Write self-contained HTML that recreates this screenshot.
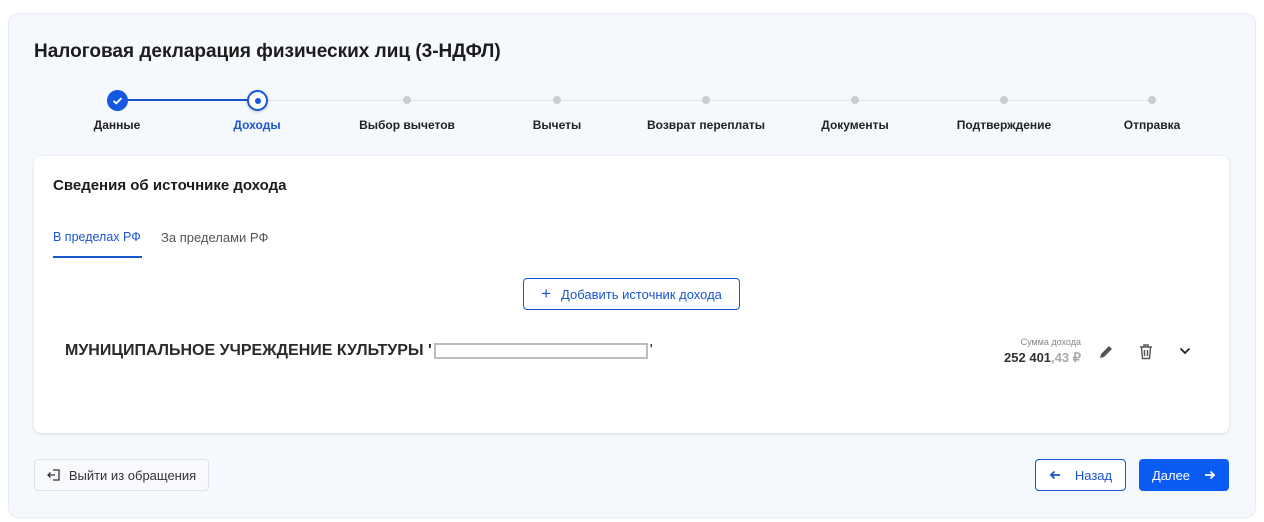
<!DOCTYPE html>
<html><head><meta charset="utf-8"><style>
*{box-sizing:border-box;margin:0;padding:0}
body{width:1264px;height:522px;background:#fff;font-family:"Liberation Sans",sans-serif;position:relative;overflow:hidden;color:#1f1f1f}
.panel{position:absolute;left:8px;top:13px;width:1248px;height:505px;background:#f5f8fd;border:1px solid #e8ecf3;border-radius:10px}
.title{position:absolute;left:34px;top:41px;font-size:19px;font-weight:bold;color:#1c1c1c}
.line{position:absolute;top:100px;height:1px;background:#dfe3ea}
.dot{position:absolute;width:8px;height:8px;border-radius:50%;background:#c9ccd1;top:96px}
.lbl{position:absolute;top:118px;font-size:12px;font-weight:bold;transform:translateX(-50%);white-space:nowrap;color:#222}
.card{position:absolute;left:34px;top:156px;width:1195px;height:277px;background:#fff;border-radius:7px;box-shadow:0 1px 3px rgba(0,0,0,.12)}
.btn{position:absolute;border-radius:4px;font-size:13px;display:flex;align-items:center;justify-content:center}
</style></head><body>
<div class="panel"></div>
<div class="title">Налоговая декларация физических лиц (3-НДФЛ)</div>
<div class="line" style="left:117px;width:140px;background:#1450c8;height:2px;top:99px"></div>
<div class="line" style="left:257px;width:895px"></div>
<div style="position:absolute;left:107px;top:90px;width:21px;height:21px;border-radius:50%;background:#1457e0"><svg width="21" height="21"><path d="M6.5 10.8l2.7 2.6 5.3-5.3" stroke="#fff" stroke-width="1.8" fill="none"/></svg></div>
<div style="position:absolute;left:247px;top:90px;width:21px;height:21px;border-radius:50%;background:#fff;border:2px solid #1457e0;box-shadow:0 1px 3px rgba(0,0,0,.2)"><div style="position:absolute;left:5.5px;top:5.5px;width:6px;height:6px;border-radius:50%;background:#1457e0"></div></div>
<div class="dot" style="left:403px"></div><div class="dot" style="left:553px"></div><div class="dot" style="left:702px"></div><div class="dot" style="left:851px"></div><div class="dot" style="left:1000px"></div><div class="dot" style="left:1148px"></div>
<div class="lbl" style="left:117px">Данные</div>
<div class="lbl" style="left:257px;color:#1a55d0">Доходы</div>
<div class="lbl" style="left:407px">Выбор вычетов</div>
<div class="lbl" style="left:557px">Вычеты</div>
<div class="lbl" style="left:706px">Возврат переплаты</div>
<div class="lbl" style="left:855px">Документы</div>
<div class="lbl" style="left:1004px">Подтверждение</div>
<div class="lbl" style="left:1152px">Отправка</div>
<div class="card"></div>
<div style="position:absolute;left:53px;top:177px;font-size:15px;font-weight:bold;color:#1c1c1c">Сведения об источнике дохода</div>
<div style="position:absolute;left:53px;top:230px;font-size:12.5px;color:#1a55d0">В пределах РФ</div>
<div style="position:absolute;left:53px;top:256px;width:89px;height:2px;background:#1a55d0"></div>
<div style="position:absolute;left:161px;top:230px;font-size:13px;color:#555">За пределами РФ</div>
<div class="btn" style="left:523px;top:278px;width:217px;height:32px;border:1px solid #1a55d0;color:#1a55d0"><span style="font-size:17px;margin-right:10px">+</span>Добавить источник дохода</div>
<div style="position:absolute;left:65px;top:342px;font-size:16px;font-weight:bold;color:#2a2a2a;white-space:nowrap;display:flex;align-items:center">МУНИЦИПАЛЬНОЕ УЧРЕЖДЕНИЕ КУЛЬТУРЫ '<span style="display:inline-block;width:214px;height:16px;border:2px solid #bdbdbd;background:#fff;margin:0 2px"></span><span style="font-weight:normal">'</span></div>
<div style="position:absolute;right:183px;top:337px;font-size:9px;color:#888">Сумма дохода</div>
<div style="position:absolute;right:183px;top:350px;font-size:13px;font-weight:bold;color:#333">252 401<span style="color:#aaa">,43 ₽</span></div>
<svg style="position:absolute;left:1098px;top:344px" width="16" height="16"><path d="M2 14l1-4 8-8 3 3-8 8z" fill="#555"/></svg>
<svg style="position:absolute;left:1138px;top:343px" width="16" height="18"><path d="M2 4h12M6 4V2h4v2M3.5 4.5l1 11h7l1-11M6.5 7v6M9.5 7v6" stroke="#555" stroke-width="1.4" fill="none"/></svg>
<svg style="position:absolute;left:1179px;top:347px" width="12" height="8"><path d="M1.5 1.5l4.5 4.5 4.5-4.5" stroke="#222" stroke-width="1.8" fill="none"/></svg>
<div class="btn" style="left:34px;top:459px;width:175px;height:32px;border:1px solid #dde2ea;background:#f7f9fc;color:#333"><svg width="14" height="14" style="margin-right:8px"><path d="M6 2h6v10H6M1 7h7M3.5 4.5L1 7l2.5 2.5" stroke="#333" stroke-width="1.3" fill="none"/></svg>Выйти из обращения</div>
<div class="btn" style="left:1035px;top:459px;width:91px;height:32px;border:1px solid #1a55d0;color:#1a55d0;background:#fff"><svg width="12" height="10" style="margin-right:14px"><path d="M11 5H2M5.5 1.5L2 5l3.5 3.5" stroke="#1a55d0" stroke-width="1.8" fill="none"/></svg>Назад</div>
<div class="btn" style="left:1139px;top:459px;width:90px;height:32px;background:#0a5cf5;color:#fff">Далее<svg width="12" height="10" style="margin-left:14px"><path d="M1 5h9M6.5 1.5L10 5 6.5 8.5" stroke="#fff" stroke-width="1.8" fill="none"/></svg></div>
</body></html>
